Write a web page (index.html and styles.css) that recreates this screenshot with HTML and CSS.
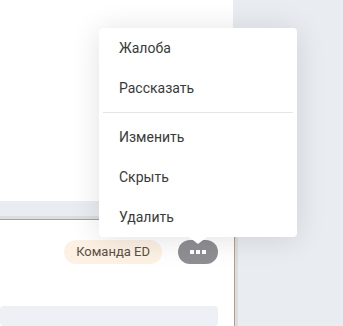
FILE: index.html
```html
<!DOCTYPE html>
<html lang="ru">
<head>
  <meta charset="UTF-8" />
  <title>Пост - меню</title>
  <link rel="stylesheet" href="styles.css">
</head>
<body>
  <div class="layout">
    <div class="feed">
      <div class="post-card"></div>
      <div class="post-gap"></div>
      <div class="post-card post-card--active">
        <div class="post-footer">
          <span class="team-badge">Команда ED</span>
          <button class="more-btn" type="button">
            <span class="dot"></span><span class="dot"></span><span class="dot"></span>
          </button>
        </div>
        <div class="post-comments"></div>
      </div>
    </div>
    <div class="sidebar"></div>
  </div>

  <div class="context-menu">
    <ul class="menu-group">
      <li>Жалоба</li>
      <li>Рассказать</li>
    </ul>
    <div class="menu-divider"></div>
    <ul class="menu-group">
      <li>Изменить</li>
      <li>Скрыть</li>
      <li>Удалить</li>
    </ul>
  </div>
</body>
</html>
```

FILE: styles.css
```css
* {
  box-sizing: border-box;
}

body {
  margin: 0;
  font-family: Roboto, "Noto Sans", sans-serif;
  background: #e9ecf1;
  color: #333;
  overflow: hidden;
}

.layout {
  display: flex;
  height: 326px;
}

.feed {
  width: 234px;
  display: flex;
  flex-direction: column;
}

.sidebar {
  flex: 1;
}

.post-card {
  background: #fff;
  height: 210px;
  width: 233px;
}

.post-gap {
  height: 19px;
}

.post-card--active {
  flex: 1;
  width: 235px;
  border-top: 1px solid #b59f80;
  border-right: 1px solid #b59f80;
  box-shadow: 0 0 0 3px #dcdddf;
  padding: 20px 16px 0 0;
}

.post-footer {
  display: flex;
  justify-content: flex-end;
  align-items: center;
  gap: 16px;
}

.team-badge {
  height: 24px;
  padding: 0 12px;
  border-radius: 12px;
  background: #fcf1e3;
  color: #5c4f45;
  font-size: 13px;
  line-height: 24px;
}

.more-btn {
  width: 40px;
  height: 24px;
  border: none;
  border-radius: 12px;
  background: #8e8e93;
  display: flex;
  align-items: center;
  justify-content: center;
  gap: 2px;
  padding: 0;
}

.dot {
  width: 4px;
  height: 4px;
  background: #fff;
}

.post-comments {
  margin-top: 42px;
  height: 20px;
  background: #edf0f4;
  border-radius: 4px;
}

.context-menu {
  position: absolute;
  left: 99px;
  top: 28px;
  width: 198px;
  background: #fff;
  border-radius: 4px;
  box-shadow: 0 2px 30px rgba(0, 0, 0, 0.12);
}

.context-menu::after {
  content: "";
  position: absolute;
  left: 90px;
  bottom: -7px;
  border-left: 9px solid transparent;
  border-right: 9px solid transparent;
  border-top: 7px solid #fff;
}

.menu-group {
  list-style: none;
  margin: 0;
  padding: 0;
}

.menu-group li {
  height: 40px;
  line-height: 40px;
  padding-left: 20px;
  font-size: 14px;
  color: #3a3a3a;
}

.menu-divider {
  height: 1px;
  margin: 4px 4px;
  background: #e6e6e6;
}
```
